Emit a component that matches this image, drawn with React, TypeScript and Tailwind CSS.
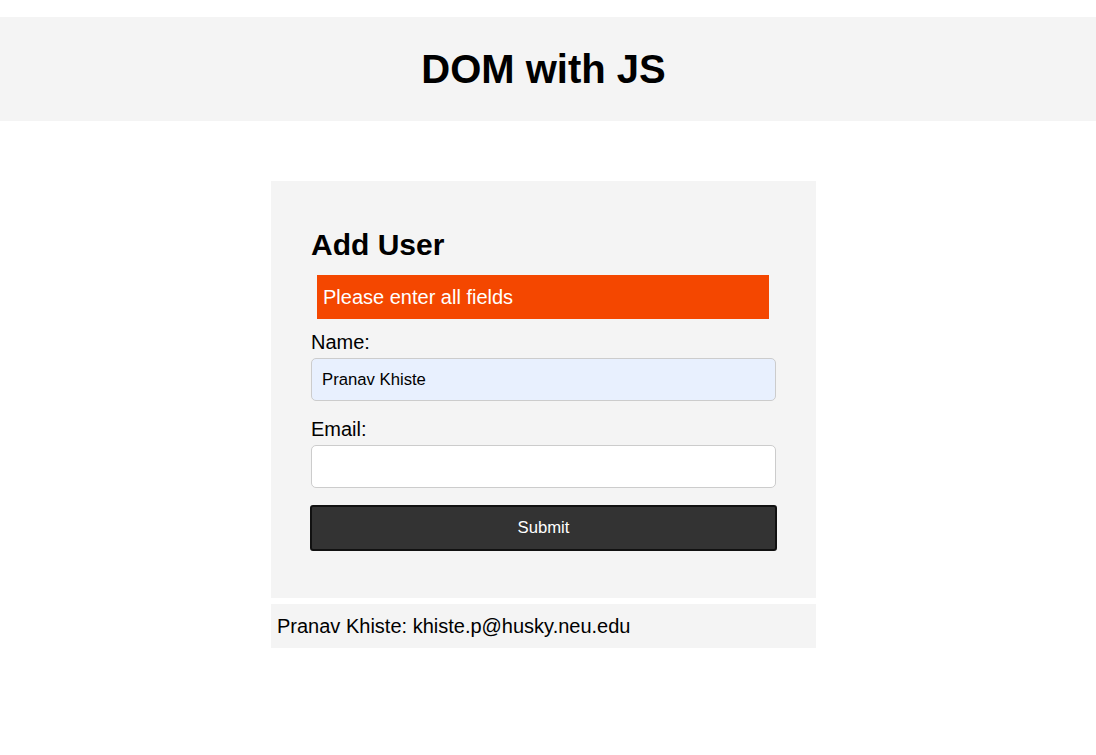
import React, { useState } from "react";

type User = { name: string; email: string };

const Field = (props: { label: string; value: string; filled?: boolean; onChange: (v: string) => void }) => {
  return (
    <div className="flex flex-col">
      <label className="text-[20px] leading-[23px] mt-[12px]">{props.label}</label>
      <input
        className={
          "mt-[4px] h-[43px] w-full rounded-[5px] border border-[#cccccc] px-[10px] text-[16.7px] text-black outline-none " +
          (props.filled ? "bg-[#e8f0fe]" : "bg-white")
        }
        value={props.value}
        onChange={(e) => props.onChange(e.target.value)}
      />
    </div>
  );
};

export default function App() {
  const [name, setName] = useState("Pranav Khiste");
  const [email, setEmail] = useState("");
  const [users] = useState<User[]>([{ name: "Pranav Khiste", email: "khiste.p@husky.neu.edu" }]);

  return (
    <div className="min-h-[755px] bg-white text-black font-['Liberation_Sans',Arial,sans-serif]">
      <header className="mt-[17px] h-[104px] bg-[#f4f4f4] flex items-center">
        <div className="w-[1087px] text-center">
          <h1 className="text-[40px] font-bold leading-[46px]">DOM with JS</h1>
        </div>
      </header>

      <div className="w-[1087px]">
        <div className="mx-auto mt-[60px] w-[545px]">
          <form
            className="bg-[#f4f4f4] px-[40px] pt-[47px] pb-[47px]"
            onSubmit={(e) => e.preventDefault()}
          >
            <h2 className="text-[30px] font-bold leading-[34px]">Add User</h2>
            <div className="mt-[13px] ml-[6px] w-[452px] bg-[#f44700] pl-[6px] pt-[11px] pb-[10px] text-[20px] leading-[23px] text-white">
              Please enter all fields
            </div>
            <Field label="Name:" value={name} filled onChange={setName} />
            <div className="mt-[5px]">
              <Field label="Email:" value={email} onChange={setEmail} />
            </div>
            <button
              type="submit"
              className="mt-[17px] -mx-px h-[46px] w-[467px] rounded-[3px] border-2 border-[#111111] bg-[#333333] text-[16.7px] text-white"
            >
              Submit
            </button>
          </form>

          <ul className="mt-[6px]">
            {users.map((u) => (
              <li key={u.email} className="bg-[#f4f4f4] pl-[6px] pt-[11px] pb-[10px] text-[20px] leading-[23px]">
                {u.name}: {u.email}
              </li>
            ))}
          </ul>
        </div>
      </div>
    </div>
  );
}
